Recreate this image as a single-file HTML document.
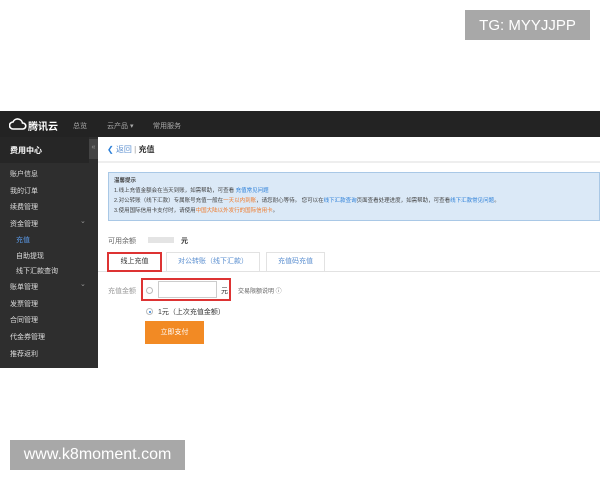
<!DOCTYPE html>
<html><head><meta charset="utf-8"><style>
*{margin:0;padding:0;box-sizing:border-box}
body{width:600px;height:480px;background:#fff;position:relative;overflow:hidden;font-family:"Liberation Sans","Noto Sans CJK SC",sans-serif;font-size:7px;color:#333}
.a{position:absolute;white-space:nowrap}
.wm{position:absolute;background:#a8a8a8;color:#fff;font-size:15px;display:flex;align-items:center;justify-content:center}
</style></head><body>
<div class="wm" style="left:465px;top:10px;width:125px;height:30px">TG: MYYJJPP</div>
<div class="wm" style="left:10px;top:440px;width:175px;height:30px;font-size:16px">www.k8moment.com</div>

<div class="a" style="left:0;top:111px;width:600px;height:26px;background:#232323"></div>
<svg class="a" style="left:9px;top:118px" width="18" height="12" viewBox="0 0 18 12"><path d="M4 11a3.5 3.5 0 0 1 0-7 5 5 0 0 1 9.5 1A3 3 0 0 1 14 11Z" fill="none" stroke="#fff" stroke-width="1.6"/></svg>
<div class="a" style="left:28px;top:118px;color:#fff;font-size:10px;font-weight:bold">腾讯云</div>
<div class="a" style="left:73px;top:121px;color:#aaa">总览</div>
<div class="a" style="left:107px;top:121px;color:#aaa">云产品 ▾</div>
<div class="a" style="left:153px;top:121px;color:#aaa">常用服务</div>

<div class="a" style="left:0;top:137px;width:98px;height:231px;background:#2e2e2e"></div>
<div class="a" style="left:0;top:137px;width:89px;height:26px;background:#262626"></div>
<div class="a" style="left:89px;top:139px;width:9px;height:20px;background:#444;color:#999;font-size:7px;text-align:center;line-height:18px">«</div>
<div class="a" style="left:10px;top:145px;color:#fff;font-size:8px;font-weight:bold">费用中心</div>
<div class="a" style="left:10px;top:167px;color:#ddd;line-height:16.7px">账户信息<br>我的订单<br>续费管理<br>资金管理</div>
<div class="a" style="left:80px;top:217px;color:#999">⌄</div>
<div class="a" style="left:16px;top:233px;color:#5b9bea;line-height:15.6px">充值<br><span style="color:#ddd">自助提现<br>线下汇款查询</span></div>
<div class="a" style="left:10px;top:280px;color:#ddd;line-height:16.7px">账单管理<br>发票管理<br>合同管理<br>代金券管理<br>推荐返利</div>
<div class="a" style="left:80px;top:280px;color:#999">⌄</div>

<div class="a" style="left:98px;top:161px;width:502px;height:2px;background:#eee"></div>
<div class="a" style="left:107px;top:144px;color:#2b7fd8;font-size:8px">❮ <span style="color:#5b8fd0">返回</span> <span style="color:#999">|</span> <b style="color:#333">充值</b></div>

<div class="a" style="left:108px;top:172px;width:492px;height:49px;background:#dbe9f7;border:1px solid #a9c8e6"></div>
<div class="a" style="left:114px;top:176px;font-size:5.5px;line-height:10px;color:#444"><b>温馨提示</b><br>1.线上充值金额会在当天到账，如需帮助，可查看 <span style="color:#2b7fd8">充值常见问题</span><br>2.对公转账（线下汇款）专属账号充值一般在<span style="color:#f07a2a">一天以内到账</span>，请您耐心等待。 您可以在<span style="color:#2b7fd8">线下汇款查询</span>页面查看处理进度，如需帮助，可查看<span style="color:#2b7fd8">线下汇款常见问题</span>。<br>3.使用国际信用卡支付时，请使用<span style="color:#f07a2a">中国大陆以外发行的国际信用卡</span>。</div>

<div class="a" style="left:108px;top:236px;color:#666">可用余额</div>
<div class="a" style="left:148px;top:237px;width:26px;height:6px;background:#e4e4e4"></div>
<div class="a" style="left:181px;top:236px;font-weight:bold">元</div>

<div class="a" style="left:98px;top:271px;width:502px;height:1px;background:#e2e2e2"></div>
<div class="a" style="left:107px;top:252px;width:55px;height:20px;border:2px solid #d33;background:#fff;text-align:center;line-height:16px">线上充值</div>
<div class="a" style="left:166px;top:252px;width:94px;height:20px;border:1px solid #e2e2e2;border-bottom:none;text-align:center;line-height:18px;color:#5b8fd0">对公转账（线下汇款）</div>
<div class="a" style="left:266px;top:252px;width:59px;height:20px;border:1px solid #e2e2e2;border-bottom:none;text-align:center;line-height:18px;color:#5b8fd0">充值码充值</div>

<div class="a" style="left:108px;top:286px;color:#999">充值金额</div>
<div class="a" style="left:141px;top:278px;width:90px;height:23px;border:2px solid #d33"></div>
<div class="a" style="left:146px;top:287px;width:7px;height:7px;border:1px solid #bbb;border-radius:50%"></div>
<div class="a" style="left:158px;top:281px;width:59px;height:17px;border:1px solid #ccc"></div>
<div class="a" style="left:221px;top:286px">元</div>
<div class="a" style="left:238px;top:286px;color:#666;font-size:6px">交易限额说明 ⓘ</div>
<div class="a" style="left:146px;top:308px;width:7px;height:7px;border:1px solid #bbb;border-radius:50%"><div style="margin:1.5px;width:2px;height:2px;border-radius:50%;background:#2b7fd8"></div></div>
<div class="a" style="left:158px;top:307px">1元（上次充值金额）</div>
<div class="a" style="left:145px;top:321px;width:59px;height:23px;background:#f28a24;color:#fff;text-align:center;line-height:23px">立即支付</div>
</body></html>
